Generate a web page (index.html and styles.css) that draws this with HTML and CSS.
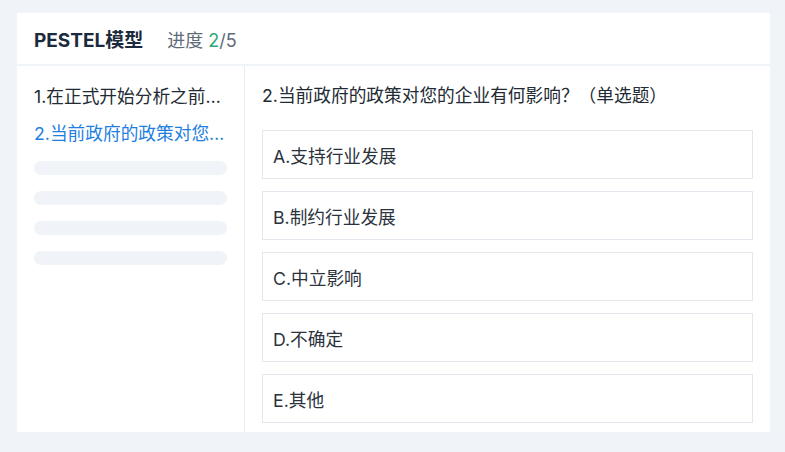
FILE: index.html
```html
<!DOCTYPE html>
<html lang="zh">
<head>
<meta charset="utf-8">
<link rel="stylesheet" href="styles.css">
</head>
<body>
<div class="card">
  <div class="header">
    <span class="title">PESTEL模型</span>
    <span class="progress">进度 <span class="cur">2</span>/5</span>
  </div>
  <div class="body">
    <div class="side">
      <div class="item">1.在正式开始分析之前，请先了解PESTEL模型</div>
      <div class="item active">2.当前政府的政策对您的企业有何影响？</div>
      <div class="skeletons">
        <div class="bar"></div>
        <div class="bar"></div>
        <div class="bar"></div>
        <div class="bar"></div>
      </div>
    </div>
    <div class="main">
      <div class="question">2.当前政府的政策对您的企业有何影响？（单选题）</div>
      <div class="options">
        <div class="option">A.支持行业发展</div>
        <div class="option">B.制约行业发展</div>
        <div class="option">C.中立影响</div>
        <div class="option">D.不确定</div>
        <div class="option">E.其他</div>
      </div>
    </div>
  </div>
</div>
</body>
</html>
```
FILE: styles.css
```css
html, body {
  margin: 0;
  padding: 0;
  background: #f0f3f7;
}
body {
  font-family: "Inter", "Noto Sans CJK SC", sans-serif;
  width: 785px;
  height: 452px;
  overflow: hidden;
}
.card {
  margin: 13px 15px 0 17px;
  width: 753px;
  display: flex;
  flex-direction: column;
  gap: 2px;
}
.header {
  background: #fff;
  height: 51px;
  display: flex;
  align-items: center;
  padding-left: 17px;
}
.title {
  font-size: 19px;
  font-weight: 700;
  color: #1b2a3c;
}
.progress {
  margin-left: 24px;
  font-size: 18px;
  color: #5f6b78;
}
.cur {
  color: #2ea77a;
}
.body {
  background: #fff;
  height: 366px;
  display: flex;
}
.side {
  width: 228px;
  border-right: 1px solid #e8ecf1;
  padding: 18px 17px 0 17px;
  box-sizing: border-box;
}
.item {
  font-size: 17.7px;
  line-height: 26px;
  color: #222a33;
  white-space: nowrap;
  overflow: hidden;
  text-overflow: ellipsis;
  margin-bottom: 11px;
  margin-right: -2px;
}
.item.active {
  color: #1f7fe0;
}
.skeletons {
  display: flex;
  flex-direction: column;
  gap: 16px;
  padding-top: 3px;
}
.bar {
  height: 14px;
  border-radius: 7px;
  background: #f0f3f7;
}
.main {
  flex: 1;
  padding: 17px 17px 0 17px;
}
.question {
  font-size: 17.7px;
  line-height: 26px;
  color: #222a33;
  margin-bottom: 21px;
}
.options {
  display: flex;
  flex-direction: column;
  gap: 12px;
}
.option {
  height: 49px;
  box-sizing: border-box;
  border: 1px solid #e3e8ee;
  display: flex;
  align-items: center;
  padding-left: 10px;
  font-size: 17.7px;
  color: #2a323c;
}
```
